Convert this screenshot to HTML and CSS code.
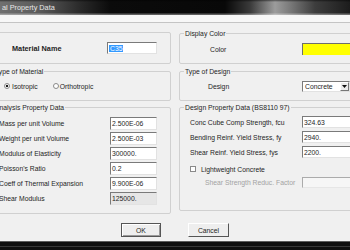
FILE: index.html
```html
<!DOCTYPE html>
<html lang="en">
<head>
  <meta charset="UTF-8" />
  <title>Material Property Data</title>
  <link rel="stylesheet" href="styles.css">
</head>
<body>
  <div class="window">
    <div class="titlebar">al Property Data</div>
    <div class="frame-edge"></div>

    <div class="client">
      <div class="col col-left">
        <div class="name-frame">
          <div class="row name-row">
            <span class="name-label">Material Name</span>
            <span class="field name-field"><span class="selected">C35</span></span>
          </div>
        </div>

        <fieldset class="group">
          <legend>Type of Material</legend>
          <div class="group-body material-type">
            <span class="radio checked"></span><span class="opt">Isotropic</span>
            <span class="radio second"></span><span class="opt">Orthotropic</span>
          </div>
        </fieldset>

        <fieldset class="group">
          <legend>Analysis Property Data</legend>
          <div class="group-body analysis">
            <div class="prop-row"><span class="prop-label">Mass per unit Volume</span><span class="field">2.500E-06</span></div>
            <div class="prop-row"><span class="prop-label">Weight per unit Volume</span><span class="field">2.500E-03</span></div>
            <div class="prop-row"><span class="prop-label">Modulus of Elasticity</span><span class="field">300000.</span></div>
            <div class="prop-row"><span class="prop-label">Poisson's Ratio</span><span class="field">0.2</span></div>
            <div class="prop-row"><span class="prop-label">Coeff of Thermal Expansion</span><span class="field">9.900E-06</span></div>
            <div class="prop-row"><span class="prop-label">Shear Modulus</span><span class="field readonly">125000.</span></div>
          </div>
        </fieldset>
      </div>

      <div class="col col-right">
        <fieldset class="group display-color">
          <legend>Display Color</legend>
          <div class="group-body color-body">
            <span class="color-label">Color</span>
            <span class="swatch"></span>
          </div>
        </fieldset>

        <fieldset class="group design-type">
          <legend>Type of Design</legend>
          <div class="group-body design-body">
            <span class="design-label">Design</span>
            <span class="combo">
              <span class="combo-text">Concrete</span>
              <span class="combo-btn">
                <svg width="5" height="3" viewBox="0 0 5 3"><polygon points="0,0 5,0 2.5,3" fill="#111"/></svg>
              </span>
            </span>
          </div>
        </fieldset>

        <fieldset class="group design-data">
          <legend>Design Property Data (BS8110 97)</legend>
          <div class="group-body design-props">
            <div class="design-row"><span class="design-prop">Conc Cube Comp Strength, fcu</span><span class="field wide">324.63</span></div>
            <div class="design-row"><span class="design-prop">Bending Reinf. Yield Stress, fy</span><span class="field wide">2940.</span></div>
            <div class="design-row"><span class="design-prop">Shear Reinf. Yield Stress, fys</span><span class="field wide">2200.</span></div>
            <div class="check-row"><span class="checkbox"></span><span>Lightweight Concrete</span></div>
            <div class="reduc-row"><span class="reduc-label">Shear Strength Reduc. Factor</span><span class="field wide disabled"></span></div>
          </div>
        </fieldset>
      </div>
    </div>

    <div class="buttons">
      <button class="btn default">OK</button>
      <button class="btn">Cancel</button>
    </div>

    <div class="taskbar"></div>
  </div>
</body>
</html>
```

FILE: styles.css
```css
body {
  margin: 0;
  background: #f0f0f0;
  font-family: "Liberation Sans", Arial, sans-serif;
  font-size: 6.8px;
  color: #1e1e1e;
}

.window {
  width: 350px;
  height: 250px;
  overflow: hidden;
  display: flex;
  flex-direction: column;
}

.titlebar {
  flex: none;
  height: 15px;
  line-height: 15px;
  padding-left: 2px;
  font-size: 7.3px;
  color: #e6e6e6;
  background:
    linear-gradient(to bottom, rgba(0, 0, 0, 0.5) 0, rgba(0, 0, 0, 0) 2px, rgba(255, 255, 255, 0) 13px, rgba(255, 255, 255, 0.35) 14px),
    linear-gradient(to right, #707070 0, #5a5a5a 40px, #2a2a2a 80px, #0b0b0b 110px, #080808 225px, #3a3a3a 250px, #9c9c9c 275px, #7a7a7a 290px, #3d3d3d 315px, #1c1c1c 350px);
}

.frame-edge {
  flex: none;
  height: 7px;
  background: #f7f7f7;
  border-bottom: 1px solid #c4c4c4;
}

.client {
  flex: none;
  display: flex;
  gap: 8px;
  margin-left: -11px;
}

.col {
  flex: none;
}

.col-left {
  width: 182px;
}

.col-right {
  width: 200px;
}

/* group boxes */
.name-frame,
.group {
  border: 1px solid #d0d0d0;
  border-radius: 2px;
}

.group {
  margin: 0;
  padding: 0;
  min-width: 0;
}

.group legend {
  padding: 0 1px;
  margin-left: 4px;
  height: 9px;
  line-height: 9px;
}

.name-frame {
  margin-top: 9px;
  padding: 9px 0 9px 22px;
}

.row,
.group-body {
  display: flex;
  align-items: center;
}

.name-row {
  height: 12px;
}

.name-label {
  width: 95px;
  font-weight: bold;
  font-size: 7.3px;
}

.field {
  box-sizing: border-box;
  display: flex;
  align-items: center;
  height: 100%;
  padding-left: 1px;
  background: #fff;
  border: 1px solid;
  border-color: #7a7a7a #e2e2e2 #e2e2e2 #7a7a7a;
}

.name-field {
  width: 50px;
}

.selected {
  padding: 0 1px;
  line-height: 7px;
  background: #3399ff;
  color: #fff;
}

/* type of material */
.material-type {
  margin-top: 0;
  height: 10px;
  padding: 5px 0 9px 14px;
}

.col-left .group {
  margin-top: 3px;
}

.col-left .group + .group {
  margin-top: 2px;
}

.radio {
  box-sizing: border-box;
  width: 6px;
  height: 6px;
  margin-right: 2px;
  border: 1px solid #8a8a8a;
  border-radius: 50%;
  background: #fff;
}

.radio.checked {
  background: radial-gradient(circle, #1a1a1a 0, #1a1a1a 1.3px, #fff 1.6px);
}

.radio.second {
  margin-left: 15px;
  margin-right: 1px;
}

/* analysis rows */
.analysis {
  display: block;
  padding: 5px 0 8px 9px;
}

.prop-row {
  display: flex;
  align-items: center;
  height: 13px;
  margin-bottom: 2px;
}

.prop-row:last-child {
  margin-bottom: 0;
}

.prop-label {
  width: 111px;
}

.prop-row .field {
  width: 47px;
}

.field.readonly {
  background: #e6e6e6;
}

/* right column */
.display-color {
  margin-top: 6px;
}

.color-body {
  height: 12px;
  padding: 5px 0 8px 30px;
}

.color-label {
  width: 92px;
}

.swatch {
  box-sizing: border-box;
  width: 70px;
  height: 12px;
  background: #ffff00;
  border-top: 1px solid #6e6e6e;
  border-left: 1px solid #6e6e6e;
}

.design-type {
  margin-top: 3px;
}

.design-body {
  height: 11px;
  padding: 5px 0 8px 28px;
}

.design-label {
  width: 94px;
}

.combo {
  box-sizing: border-box;
  display: flex;
  width: 48px;
  height: 11px;
  background: #fff;
  border: 1px solid;
  border-color: #7a7a7a #e2e2e2 #e2e2e2 #7a7a7a;
}

.combo-text {
  flex: 1;
  padding-left: 2px;
  line-height: 9px;
}

.combo-btn {
  box-sizing: border-box;
  width: 9px;
  display: flex;
  align-items: center;
  justify-content: center;
  background: #ececec;
  border: 1px solid;
  border-color: #fff #777 #777 #fff;
}

.design-data {
  margin-top: 2px;
}

.design-props {
  display: block;
  padding: 4px 0 22px 10px;
}

.design-row {
  display: flex;
  align-items: center;
  height: 12px;
  margin-bottom: 3px;
}

.design-prop {
  width: 112px;
}

.field.wide {
  width: 70px;
}

.check-row {
  display: flex;
  align-items: center;
  height: 10px;
  margin-top: 6px;
}

.checkbox {
  box-sizing: border-box;
  width: 6px;
  height: 6px;
  margin-right: 5px;
  border: 1px solid #8a8a8a;
  background: #fff;
}

.reduc-row {
  display: flex;
  align-items: center;
  height: 11px;
  margin-top: 3px;
}

.reduc-label {
  width: 97px;
  margin-left: 15px;
  color: #a3a3a3;
}

.field.disabled {
  background: #f6f6f6;
  border-color: #ababab #e6e6e6 #e6e6e6 #ababab;
}

/* buttons */
.buttons {
  flex: none;
  display: flex;
  gap: 27px;
  padding: 9px 0 0 121px;
}

.btn {
  box-sizing: border-box;
  width: 40px;
  height: 14px;
  padding: 0;
  font: inherit;
  color: #1e1e1e;
  background: #eeeeee;
  border: 1px solid;
  border-color: #fff #555 #555 #fff;
  border-radius: 0;
}

.btn + .btn {
  width: 41px;
}

.btn.default {
  border-color: #555;
  box-shadow: inset 1px 1px #fff, inset -1px -1px #9a9a9a;
}

.taskbar {
  flex: none;
  margin-top: auto;
  height: 9px;
  background: linear-gradient(to bottom, #5a5a5a 0, #5a5a5a 1px, #0d0d0d 1px, #0d0d0d 5px, #363636 5px, #363636 6px, #0d0d0d 6px);
}
```
